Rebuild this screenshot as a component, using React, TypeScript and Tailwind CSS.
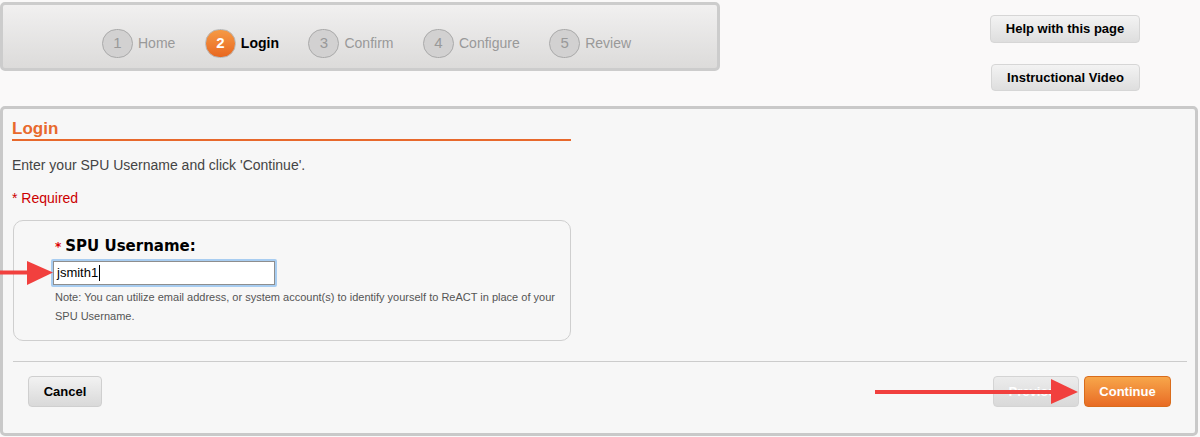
import React from "react";

const steps = [
  { n: "1", label: "Home" },
  { n: "2", label: "Login", active: true },
  { n: "3", label: "Confirm" },
  { n: "4", label: "Configure" },
  { n: "5", label: "Review" },
];

export default function App() {
  return (
    <div className="relative w-[1200px] h-[437px] bg-[#faf9f9] overflow-hidden font-['Liberation_Sans',Arial,sans-serif]">
      {/* Top row */}
      <div className="flex items-start">
        <div className="mt-[2px] w-[720px] h-[69px] rounded-[5px] border-[3px] border-[#cccccc] bg-gradient-to-b from-[#f1f0f0] to-[#dcdbda] flex items-center pl-[99px] pt-[14px]">
          <div className="flex items-center gap-[29.5px]">
            {steps.map((s) => (
              <div key={s.n} className="flex items-center gap-[5px]">
                {s.active ? (
                  <div className="w-[31px] h-[29px] rounded-full border border-[#b8b8b8] bg-gradient-to-b from-[#f59a45] to-[#e8671f] flex items-center justify-center text-white font-bold text-[15px]">
                    {s.n}
                  </div>
                ) : (
                  <div className="w-[31px] h-[29px] rounded-full border border-[#aaaaaa] bg-[#d2d1d1] flex items-center justify-center text-[#999999] text-[15px]">
                    {s.n}
                  </div>
                )}
                <span className={s.active ? "text-[14px] font-bold text-black" : "text-[14px] text-[#999999]"}>
                  {s.label}
                </span>
              </div>
            ))}
          </div>
        </div>
        <div className="ml-[270px] mt-[15px] flex flex-col items-start gap-[21px]">
          <button className="w-[150px] h-[28px] rounded-[4px] border border-[#d6d6d6] bg-gradient-to-b from-[#f3f3f3] to-[#dedede] text-[13px] font-bold text-black">
            Help with this page
          </button>
          <button className="ml-[1px] w-[149px] h-[27px] rounded-[4px] border border-[#d6d6d6] bg-gradient-to-b from-[#f3f3f3] to-[#dedede] text-[13px] font-bold text-black">
            Instructional Video
          </button>
        </div>
      </div>

      {/* Main panel */}
      <div className="absolute left-0 top-[106px] w-[1198px] h-[330px] rounded-[5px] border-[3px] border-[#c9c9c9] bg-[#f7f7f7] flex flex-col">
        <div className="ml-[9px] mt-[10px] w-[559px] border-b-2 border-[#e8692c]">
          <h1 className="text-[17px] leading-[20px] font-bold text-[#e8692c]">Login</h1>
        </div>
        <p className="ml-[9px] mt-[14px] text-[14px] leading-[20px] text-[#444444]">
          Enter your SPU Username and click 'Continue'.
        </p>
        <p className="ml-[9px] mt-[13px] text-[14px] leading-[20px] text-[#cc0000]">* Required</p>
        <div className="ml-[10px] mt-[12px] w-[558px] h-[121px] rounded-[10px] border border-[#cfcfcf] bg-[#f7f7f7] flex flex-col">
          <div className="ml-[41px] mt-[15px] text-[15px] leading-[20px] font-bold text-black font-['DejaVu_Sans',sans-serif]">
            <span className="text-[#dd0000] text-[12px] mr-[4px]">*</span>SPU Username:
          </div>
          <div className="ml-[37px] mt-[2px] w-[226px] h-[28px] rounded-[2px] border-2 border-[#a8cdf1] bg-[#a8cdf1]">
            <div className="w-full h-full border border-[#8e8e8e] bg-white flex items-center pl-[3px] text-[13px] text-black">
              jsmith1<span className="inline-block w-px h-[16px] bg-black ml-px" />
            </div>
          </div>
          <p className="ml-[41px] mt-[1px] text-[11px] leading-[19px] text-[#555555]">
            Note: You can utilize email address, or system account(s) to identify yourself to ReACT in place of your
            <br />
            SPU Username.
          </p>
        </div>
        <div className="ml-[10px] mr-[8px] mt-[20px] h-px bg-[#cccccc]" />
        <div className="mt-[14px] ml-[25px] mr-[24px] flex items-center">
          <button className="w-[74px] h-[31px] rounded-[4px] border border-[#cfcfcf] bg-gradient-to-b from-[#f2f2f2] to-[#d9d9d9] text-[13px] font-bold text-black">
            Cancel
          </button>
          <div className="flex-1" />
          <button className="w-[86px] h-[31px] rounded-[4px] border border-[#d4d4d4] bg-gradient-to-b from-[#ececec] to-[#d9d9d9] text-[13px] font-bold text-white">
            Previous
          </button>
          <button className="ml-[5px] w-[87px] h-[31px] rounded-[4px] border border-[#d96c1c] bg-gradient-to-b from-[#f7a64a] to-[#e86b24] text-[13px] font-bold text-white">
            Continue
          </button>
        </div>
      </div>

      {/* Red annotation arrows */}
      <svg className="absolute left-0 top-0 pointer-events-none" width="1200" height="437">
        <rect x="0" y="270.5" width="30" height="4" fill="#f1403e" />
        <polygon points="27,261 53,272.5 27,285" fill="#f1403e" />
        <rect x="875" y="390" width="180" height="4" fill="#f1403e" />
        <polygon points="1051,379 1078,392 1051,404" fill="#f1403e" />
      </svg>
    </div>
  );
}
